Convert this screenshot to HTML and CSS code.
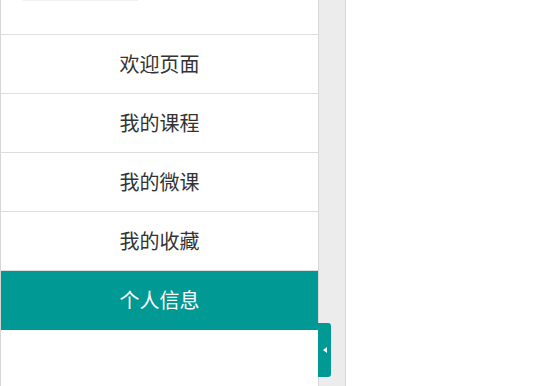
FILE: index.html
```html
<html>

<head>
  <link rel="stylesheet" href="styles.css">
</head>

<body>
  <div class="layout">
    <div class="sidebar">
      <div class="logo">
        <div class="logo-img"></div>
      </div>
      <ul class="menu">
        <li>欢迎页面</li>
        <li>我的课程</li>
        <li>我的微课</li>
        <li>我的收藏</li>
        <li class="active">个人信息</li>
      </ul>
    </div>
    <div class="strip">
      <div class="toggle"><span class="arrow"></span></div>
    </div>
    <div class="main"></div>
  </div>
</body>

</html>
```

FILE: styles.css
```css
body {
  margin: 0;
  padding: 0;
  font-family: "Noto Sans CJK SC", "Liberation Sans", sans-serif;
  background-color: #ffffff;
  overflow: hidden;
}

.layout {
  display: flex;
  height: 386px;
}

.sidebar {
  width: 317px;
  border-left: 1px solid #d6d6d6;
  background-color: #ffffff;
}

.logo {
  height: 34px;
  border-bottom: 1px solid #dddddd;
  padding-left: 22px;
}

.logo-img {
  width: 115px;
  height: 1px;
  background-color: #f0f0f0;
}

.menu {
  list-style: none;
  margin: 0;
  padding: 0;
}

.menu li {
  height: 58px;
  line-height: 58px;
  border-bottom: 1px solid #dddddd;
  text-align: center;
  font-size: 20px;
  color: #333333;
}

.menu li.active {
  background-color: #009994;
  color: #ffffff;
  border-bottom-color: #009994;
}

.strip {
  position: relative;
  width: 26px;
  background-color: #ececec;
  border-left: 1px solid #d8d8d8;
  border-right: 1px solid #d8d8d8;
}

.toggle {
  position: absolute;
  left: -1px;
  top: 323px;
  width: 13px;
  height: 54px;
  background-color: #009994;
  border-radius: 0 3px 3px 0;
  display: flex;
  align-items: center;
  justify-content: center;
}

.arrow {
  width: 0;
  height: 0;
  border-top: 3px solid transparent;
  border-bottom: 3px solid transparent;
  border-right: 4px solid #ffffff;
}

.main {
  flex: 1;
  background-color: #ffffff;
}
```
